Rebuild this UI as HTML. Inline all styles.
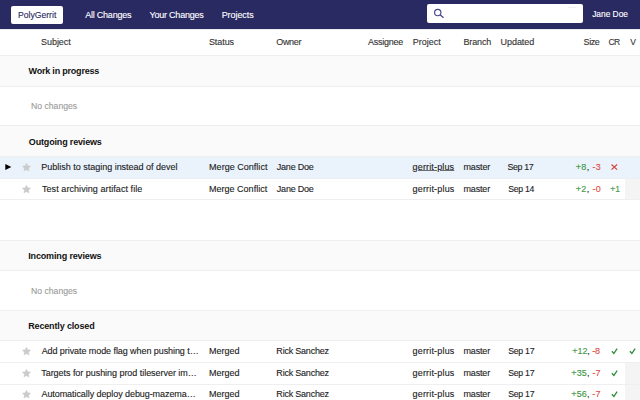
<!DOCTYPE html>
<html><head><meta charset="utf-8">
<style>
html,body{margin:0;padding:0;width:640px;height:400px;overflow:hidden;background:#fff;}
body{font-family:"Liberation Sans",sans-serif;font-size:9px;color:#222;position:relative;}
.a{position:absolute;white-space:nowrap;line-height:10px;-webkit-text-stroke:0.12px currentColor;}
.bg{position:absolute;left:0;width:640px;}
.sec{background:#fafafa;border-top:1px solid #efefef;border-bottom:1px solid #efefef;box-sizing:border-box;}
.ln{height:1px;background:#efefef;}
.nav{color:#fff;}
.pg{color:#2a2a62;}
.hd{color:#333;}
.b{font-weight:bold;color:#111;-webkit-text-stroke:0;}
.nc{color:#9a9a9a;-webkit-text-stroke:0.1px currentColor;}
.u{text-decoration:underline;text-decoration-color:#6d6d6d;text-underline-offset:0px;}
.g{color:#3b9845;}
.r{color:#df4a42;}
.star{position:absolute;width:11px;height:11px;}
</style></head><body>
<div class="bg" style="top:0;height:29px;background:#2a2a62;"></div>
<div class="bg" style="top:29px;height:1px;background:#e9e9ee;"></div>
<div style="position:absolute;left:11px;top:5.5px;width:52px;height:18.2px;background:#fff;border-radius:2px;"></div>
<div style="position:absolute;left:427.3px;top:3.8px;width:155.3px;height:19.7px;background:#fff;border-radius:2px;"></div>
<div style="position:absolute;left:567.5px;top:7px;width:8.5px;height:1px;background:#f1f1f1;"></div>
<svg style="position:absolute;left:430px;top:6px" width="16" height="16" viewBox="0 0 16 16"><circle cx="7.75" cy="6.55" r="3.15" fill="none" stroke="#48468a" stroke-width="1.15"/><line x1="10" y1="8.8" x2="13.6" y2="11.8" stroke="#48468a" stroke-width="1.25"/></svg>
<div class="bg sec" style="top:55px;height:32px;"></div>
<div class="bg sec" style="top:125px;height:32px;"></div>
<div class="bg" style="top:157px;height:21px;background:#eaf3fb;"></div>
<div class="bg ln" style="top:178px;"></div>
<div style="position:absolute;left:625px;top:179px;width:15px;height:20px;background:#f4f4f4;"></div>
<div class="bg ln" style="top:199px;"></div>
<div class="bg sec" style="top:240px;height:31px;"></div>
<div class="bg sec" style="top:310px;height:31px;"></div>
<div class="bg ln" style="top:362px;"></div>
<div class="bg ln" style="top:384px;"></div>
<div style="position:absolute;left:625px;top:363px;width:15px;height:21px;background:#f4f4f4;"></div>
<div style="position:absolute;left:625px;top:385px;width:15px;height:15px;background:#f4f4f4;"></div>
<svg style="position:absolute;left:5px;top:164px" width="7" height="7" viewBox="0 0 7 7"><path d="M0.3 0 L6.3 3 L0.3 6 Z" fill="#000"/></svg>
<svg class="star" style="left:21.0px;top:161.8px" viewBox="0 0 11 11"><polygon points="5.50,1.05 6.85,3.64 9.73,4.12 7.69,6.21 8.12,9.10 5.50,7.80 2.88,9.10 3.31,6.21 1.27,4.12 4.15,3.64" fill="#cbcbcb" stroke="#cbcbcb" stroke-width="0.3" stroke-linejoin="round"/></svg>
<svg class="star" style="left:21.0px;top:183.5px" viewBox="0 0 11 11"><polygon points="5.50,1.05 6.85,3.64 9.73,4.12 7.69,6.21 8.12,9.10 5.50,7.80 2.88,9.10 3.31,6.21 1.27,4.12 4.15,3.64" fill="#cbcbcb" stroke="#cbcbcb" stroke-width="0.3" stroke-linejoin="round"/></svg>
<svg class="star" style="left:21.0px;top:345.9px" viewBox="0 0 11 11"><polygon points="5.50,1.05 6.85,3.64 9.73,4.12 7.69,6.21 8.12,9.10 5.50,7.80 2.88,9.10 3.31,6.21 1.27,4.12 4.15,3.64" fill="#cbcbcb" stroke="#cbcbcb" stroke-width="0.3" stroke-linejoin="round"/></svg>
<svg class="star" style="left:21.0px;top:367.6px" viewBox="0 0 11 11"><polygon points="5.50,1.05 6.85,3.64 9.73,4.12 7.69,6.21 8.12,9.10 5.50,7.80 2.88,9.10 3.31,6.21 1.27,4.12 4.15,3.64" fill="#cbcbcb" stroke="#cbcbcb" stroke-width="0.3" stroke-linejoin="round"/></svg>
<svg class="star" style="left:21.0px;top:389.3px" viewBox="0 0 11 11"><polygon points="5.50,1.05 6.85,3.64 9.73,4.12 7.69,6.21 8.12,9.10 5.50,7.80 2.88,9.10 3.31,6.21 1.27,4.12 4.15,3.64" fill="#cbcbcb" stroke="#cbcbcb" stroke-width="0.3" stroke-linejoin="round"/></svg>
<svg style="position:absolute;left:606px;top:158.00px" width="16" height="16" viewBox="606 158 16 16"><path d="M611.5 164.5L617.1 169.6M617.1 164.5L611.5 169.6" stroke="#d9453d" stroke-width="1.25" fill="none"/></svg>
<svg style="position:absolute;left:606.00px;top:341.90px" width="16" height="16" viewBox="606 158 16 16"><path d="M611.9 351.3L613.9 353.5L617.1 348.7" transform="translate(0,-184)" stroke="#2e8b3a" stroke-width="1.35" fill="none"/></svg>
<svg style="position:absolute;left:623.80px;top:341.90px" width="16" height="16" viewBox="606 158 16 16"><path d="M611.9 351.3L613.9 353.5L617.1 348.7" transform="translate(0,-184)" stroke="#2e8b3a" stroke-width="1.35" fill="none"/></svg>
<svg style="position:absolute;left:606.00px;top:363.60px" width="16" height="16" viewBox="606 158 16 16"><path d="M611.9 351.3L613.9 353.5L617.1 348.7" transform="translate(0,-184)" stroke="#2e8b3a" stroke-width="1.35" fill="none"/></svg>
<svg style="position:absolute;left:606.00px;top:385.30px" width="16" height="16" viewBox="606 158 16 16"><path d="M611.9 351.3L613.9 353.5L617.1 348.7" transform="translate(0,-184)" stroke="#2e8b3a" stroke-width="1.35" fill="none"/></svg>
<div id="polyg" class="a pg" style="left:17.94px;top:9.50px;font-size:8.650px;">PolyGerrit</div>
<div id="allc" class="a nav" style="left:85.21px;top:9.80px;font-size:9.000px;letter-spacing:-0.225px;">All Changes</div>
<div id="yourc" class="a nav" style="left:149.59px;top:9.80px;font-size:9.000px;letter-spacing:-0.234px;">Your Changes</div>
<div id="proj" class="a nav" style="left:221.68px;top:9.80px;font-size:9.000px;letter-spacing:-0.073px;">Projects</div>
<div id="jane" class="a nav" style="left:592.14px;top:9.00px;font-size:8.400px;">Jane Doe</div>
<div id="h_subj" class="a hd" style="left:40.97px;top:36.90px;font-size:9.000px;letter-spacing:-0.031px;">Subject</div>
<div id="h_stat" class="a hd" style="left:208.92px;top:36.90px;font-size:9.000px;letter-spacing:-0.063px;">Status</div>
<div id="h_own" class="a hd" style="left:276.24px;top:36.90px;font-size:9.000px;letter-spacing:-0.323px;">Owner</div>
<div id="h_asg" class="a hd" style="left:368.08px;top:36.90px;font-size:9.000px;letter-spacing:-0.274px;">Assignee</div>
<div id="h_proj" class="a hd" style="left:412.83px;top:36.90px;font-size:9.000px;letter-spacing:-0.033px;">Project</div>
<div id="h_br" class="a hd" style="left:463.38px;top:36.90px;font-size:9.000px;letter-spacing:-0.125px;">Branch</div>
<div id="h_upd" class="a hd" style="left:500.59px;top:36.90px;font-size:9.000px;letter-spacing:-0.055px;">Updated</div>
<div id="h_size" class="a hd" style="left:583.55px;top:36.90px;font-size:9.000px;letter-spacing:-0.406px;">Size</div>
<div id="h_cr" class="a hd" style="left:608.54px;top:36.90px;font-size:8.500px;letter-spacing:-0.598px;">CR</div>
<div id="h_v" class="a hd" style="left:630.18px;top:36.90px;font-size:8.500px;">V</div>
<div id="s_wip" class="a b" style="left:28.52px;top:66.00px;font-size:9.000px;letter-spacing:-0.203px;">Work in progress</div>
<div id="nc1" class="a nc" style="left:31.09px;top:101.00px;font-size:8.650px;">No changes</div>
<div id="s_out" class="a b" style="left:28.83px;top:136.75px;font-size:9.000px;letter-spacing:-0.164px;">Outgoing reviews</div>
<div id="s_inc" class="a b" style="left:28.18px;top:251.00px;font-size:9.000px;letter-spacing:-0.144px;">Incoming reviews</div>
<div id="nc2" class="a nc" style="left:31.09px;top:285.60px;font-size:8.650px;">No changes</div>
<div id="s_rc" class="a b" style="left:28.21px;top:320.50px;font-size:9.000px;letter-spacing:-0.149px;">Recently closed</div>
<div id="r1_subj" class="a" style="left:41.29px;top:162.10px;font-size:9.000px;letter-spacing:-0.010px;">Publish to staging instead of devel</div>
<div id="r1_stat" class="a" style="left:209.08px;top:162.10px;font-size:9.000px;letter-spacing:0.024px;">Merge Conflict</div>
<div id="r1_own" class="a" style="left:276.85px;top:162.10px;font-size:9.000px;letter-spacing:-0.240px;">Jane Doe</div>
<div id="r1_proj" class="a u" style="left:412.62px;top:162.10px;font-size:9.000px;letter-spacing:0.150px;">gerrit-plus</div>
<div id="r1_br" class="a" style="left:463.47px;top:162.10px;font-size:9.000px;letter-spacing:-0.145px;">master</div>
<div id="r1_date" class="a" style="left:507.53px;top:162.10px;font-size:8.800px;letter-spacing:-0.362px;">Sep 17</div>
<div id="r1_size" class="a" style="left:575.78px;top:162.10px;font-size:9.000px;letter-spacing:0.342px;"><span class="g">+8</span>, <span class="r">-3</span></div>
<div id="r2_subj" class="a" style="left:41.97px;top:183.80px;font-size:9.000px;letter-spacing:0.067px;">Test archiving artifact file</div>
<div id="r2_stat" class="a" style="left:208.96px;top:183.80px;font-size:9.000px;letter-spacing:0.017px;">Merge Conflict</div>
<div id="r2_own" class="a" style="left:276.80px;top:183.80px;font-size:9.000px;letter-spacing:-0.211px;">Jane Doe</div>
<div id="r2_proj" class="a" style="left:412.53px;top:183.80px;font-size:9.000px;letter-spacing:0.180px;">gerrit-plus</div>
<div id="r2_br" class="a" style="left:463.43px;top:183.80px;font-size:9.000px;letter-spacing:-0.146px;">master</div>
<div id="r2_date" class="a" style="left:508.16px;top:183.80px;font-size:8.700px;letter-spacing:-0.250px;">Sep 14</div>
<div id="r2_size" class="a" style="left:575.70px;top:183.80px;font-size:9.000px;letter-spacing:0.353px;"><span class="g">+2</span>, <span class="r">-0</span></div>
<div id="r2_cr" class="a g" style="left:610.23px;top:183.80px;font-size:8.500px;">+1</div>
<div id="r3_subj" class="a" style="left:41.65px;top:346.00px;font-size:9.000px;letter-spacing:-0.072px;">Add private mode flag when pushing t…</div>
<div id="r3_stat" class="a" style="left:209.08px;top:346.00px;font-size:9.000px;letter-spacing:-0.042px;">Merged</div>
<div id="r3_own" class="a" style="left:276.36px;top:346.00px;font-size:9.000px;letter-spacing:-0.215px;">Rick Sanchez</div>
<div id="r3_proj" class="a" style="left:412.53px;top:346.00px;font-size:9.000px;letter-spacing:0.180px;">gerrit-plus</div>
<div id="r3_br" class="a" style="left:463.43px;top:346.00px;font-size:9.000px;letter-spacing:-0.146px;">master</div>
<div id="r3_date" class="a" style="left:508.15px;top:346.00px;font-size:8.700px;letter-spacing:-0.243px;">Sep 17</div>
<div id="r3_size" class="a" style="left:572.32px;top:346.00px;font-size:9.000px;letter-spacing:-0.092px;"><span class="g">+12</span>, <span class="r">-8</span></div>
<div id="r4_subj" class="a" style="left:41.22px;top:367.71px;font-size:9.000px;letter-spacing:-0.041px;">Targets for pushing prod tileserver im…</div>
<div id="r4_stat" class="a" style="left:209.08px;top:367.71px;font-size:9.000px;letter-spacing:-0.042px;">Merged</div>
<div id="r4_own" class="a" style="left:276.36px;top:367.71px;font-size:9.000px;letter-spacing:-0.215px;">Rick Sanchez</div>
<div id="r4_proj" class="a" style="left:412.53px;top:367.71px;font-size:9.000px;letter-spacing:0.180px;">gerrit-plus</div>
<div id="r4_br" class="a" style="left:463.43px;top:367.71px;font-size:9.000px;letter-spacing:-0.146px;">master</div>
<div id="r4_date" class="a" style="left:508.15px;top:367.71px;font-size:8.700px;letter-spacing:-0.243px;">Sep 17</div>
<div id="r4_size" class="a" style="left:571.25px;top:367.71px;font-size:9.000px;letter-spacing:0.170px;"><span class="g">+35</span>, <span class="r">-7</span></div>
<div id="r5_subj" class="a" style="left:41.48px;top:389.40px;font-size:9.000px;letter-spacing:-0.071px;">Automatically deploy debug-mazema…</div>
<div id="r5_stat" class="a" style="left:209.08px;top:389.40px;font-size:9.000px;letter-spacing:-0.042px;">Merged</div>
<div id="r5_own" class="a" style="left:276.36px;top:389.40px;font-size:9.000px;letter-spacing:-0.215px;">Rick Sanchez</div>
<div id="r5_proj" class="a" style="left:412.53px;top:389.40px;font-size:9.000px;letter-spacing:0.180px;">gerrit-plus</div>
<div id="r5_br" class="a" style="left:463.43px;top:389.40px;font-size:9.000px;letter-spacing:-0.146px;">master</div>
<div id="r5_date" class="a" style="left:508.15px;top:389.40px;font-size:8.700px;letter-spacing:-0.243px;">Sep 17</div>
<div id="r5_size" class="a" style="left:571.26px;top:389.40px;font-size:9.000px;letter-spacing:0.164px;"><span class="g">+56</span>, <span class="r">-7</span></div>
</body></html>
